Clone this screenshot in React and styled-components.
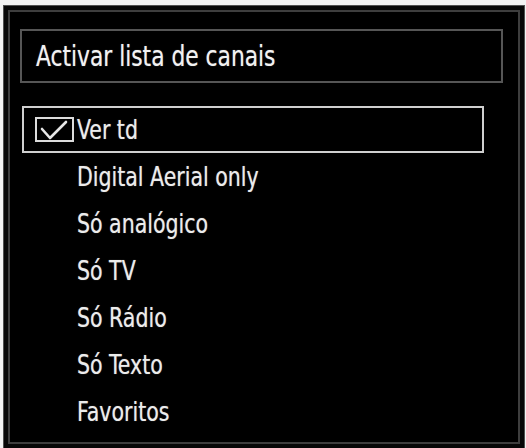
import React from 'react';
import styled, { createGlobalStyle } from 'styled-components';

const GlobalStyle = createGlobalStyle`
  html, body {
    margin: 0;
    padding: 0;
    background: #f2f2f2;
  }
  body {
    font-family: "DejaVu Sans Condensed", "DejaVu Sans", sans-serif;
  }
`;

const Screen = styled.div`
  width: 526px;
  height: 448px;
  box-sizing: border-box;
  padding: 5px 1px 0 3px;
  overflow: hidden;
`;

const Panel = styled.div`
  height: 100%;
  box-sizing: border-box;
  background: #000;
  border: 1px solid #505050;
  border-bottom: none;
  box-shadow: inset 0 0 0 4px #070707, inset 0 0 0 6px #3e3e3e;
  padding: 23px 21px 0 16px;
  display: flex;
  flex-direction: column;
`;

const TitleBox = styled.div`
  height: 54px;
  box-sizing: border-box;
  border: 2px solid #565656;
  display: flex;
  align-items: center;
  padding-left: 14px;
  color: #f2f2f2;
  font-size: 29px;
  text-shadow: 0 0 1px rgba(255, 255, 255, 0.5);
`;

/* the set-top box font is tall and narrow */
const Narrow = styled.span`
  display: inline-block;
  white-space: nowrap;
  transform: scaleX(${p => p.$squeeze});
  transform-origin: left center;
`;

const List = styled.ul`
  list-style: none;
  margin: 23px 0 0 2px;
  padding: 0;
  width: 462px;
`;

const Row = styled.li`
  height: 47px;
  box-sizing: border-box;
  display: flex;
  align-items: center;
  gap: 3px;
  padding-left: 11px;
  border: 2px solid ${p => (p.$active ? '#cfcfcf' : 'transparent')};
  color: #ececec;
  font-size: 27px;
  text-shadow: 0 0 1px rgba(255, 255, 255, 0.5);
`;

const CheckSlot = styled.span`
  width: 39px;
  height: 25px;
  flex: none;
  box-sizing: border-box;
  border: 2px solid ${p => (p.$on ? '#dcdcdc' : 'transparent')};
  display: flex;
  align-items: center;
  justify-content: center;
`;

const items = [
  'Ver td',
  'Digital Aerial only',
  'Só analógico',
  'Só TV',
  'Só Rádio',
  'Só Texto',
  'Favoritos',
];

function Tick() {
  return (
    <svg width="35" height="21" viewBox="0 0 35 21">
      <path d="M5 10 L13 19 L29 3" fill="none" stroke="#e6e6e6" strokeWidth="2.6" strokeLinecap="round" strokeLinejoin="round" />
    </svg>
  );
}

export default function App() {
  const selected = 0;
  return (
    <Screen>
      <GlobalStyle />
      <Panel>
        <TitleBox>
          <Narrow $squeeze={0.835}>Activar lista de canais</Narrow>
        </TitleBox>
        <List>
          {items.map((label, i) => (
            <Row key={label} $active={i === selected}>
              <CheckSlot $on={i === selected}>{i === selected && <Tick />}</CheckSlot>
              <Narrow $squeeze={0.845}>{label}</Narrow>
            </Row>
          ))}
        </List>
      </Panel>
    </Screen>
  );
}
